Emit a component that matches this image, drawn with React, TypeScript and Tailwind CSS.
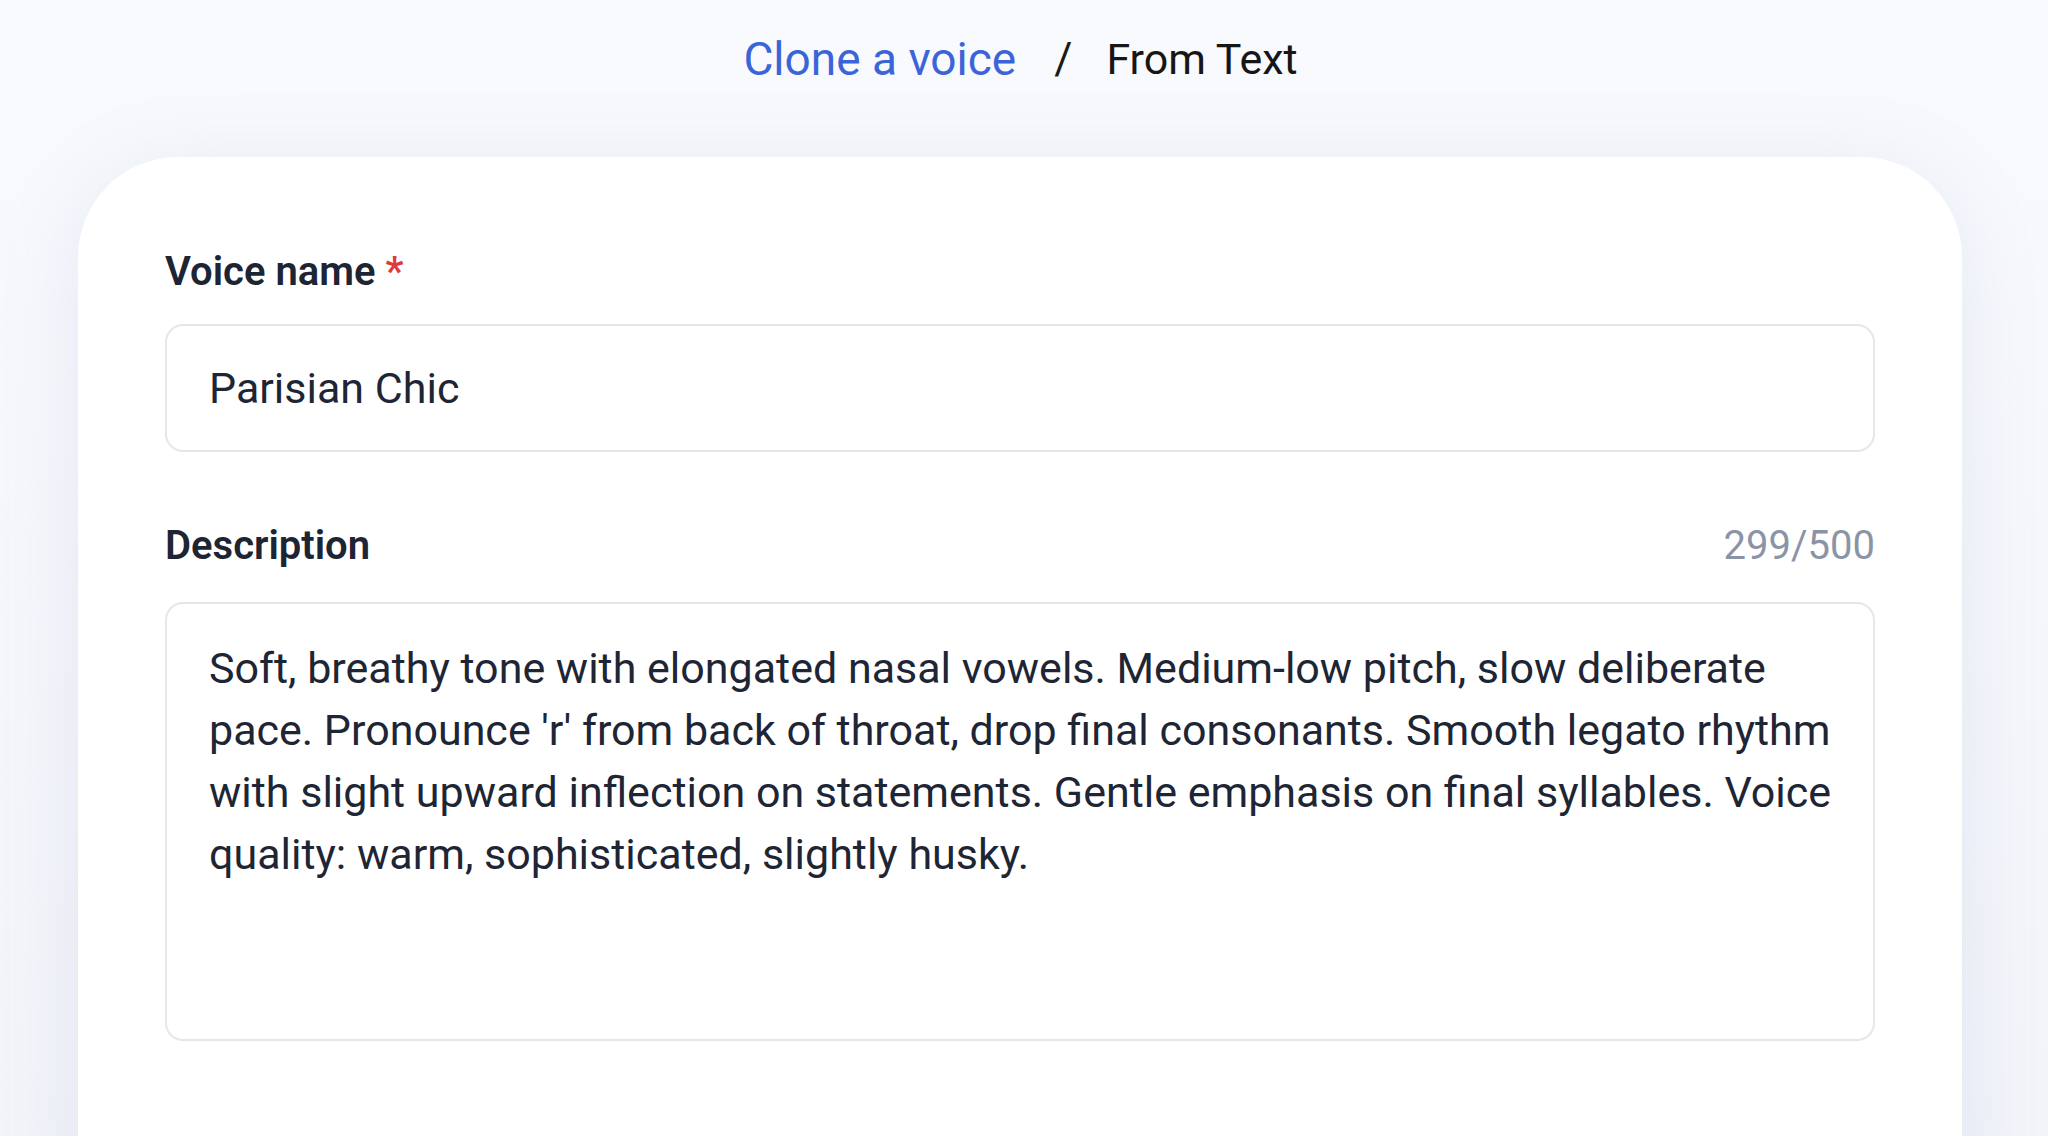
import React from "react";

const DESCRIPTION =
  "Soft, breathy tone with elongated nasal vowels. Medium-low pitch, slow deliberate pace. Pronounce 'r' from back of throat, drop final consonants. Smooth legato rhythm with slight upward inflection on statements. Gentle emphasis on final syllables. Voice quality: warm, sophisticated, slightly husky.";

export default function App() {
  return (
    <div className="h-[1136px] overflow-hidden bg-gradient-to-b from-[#f8fafd] to-[#f2f4f9] font-['Roboto','Liberation_Sans',sans-serif]">
      <nav className="flex h-[118px] items-center justify-center pr-[7px] leading-none">
        <a href="#" className="text-[46px] text-[#3c64d9]">
          Clone a voice
        </a>
        <span className="ml-[38px] text-[44px] text-[#1a1a1a]">/</span>
        <span className="ml-[34px] text-[43px] text-[#161616]">From Text</span>
      </nav>

      <div className="ml-[78px] mt-[39px] h-[1100px] w-[1884px] rounded-[100px] bg-white px-[87px] pt-[91px] shadow-[0_10px_80px_rgba(140,155,200,0.16)]">
        <label className="block text-[40px] font-semibold leading-[48px] text-[#1d2433]">
          Voice name <span className="text-[#e0393b]">*</span>
        </label>
        <input
          defaultValue="Parisian Chic"
          className="mt-[28px] block h-[128px] w-full rounded-[18px] border-2 border-[#e4e7ec] bg-white px-[42px] text-[43px] text-[#1e2535] outline-none"
        />

        <div className="mt-[70px] flex h-[48px] items-center justify-between">
          <label className="text-[40px] font-semibold leading-[48px] text-[#1d2433]">
            Description
          </label>
          <span className="text-[40px] text-[#8b94a7]">299/500</span>
        </div>
        <textarea
          defaultValue={DESCRIPTION}
          className="mt-[32px] block h-[439px] w-full resize-none rounded-[18px] border-2 border-[#e4e7ec] bg-white pl-[42px] pr-[8px] pt-[33px] text-[43px] leading-[62px] text-[#1e2535] outline-none"
        />
      </div>
    </div>
  );
}
